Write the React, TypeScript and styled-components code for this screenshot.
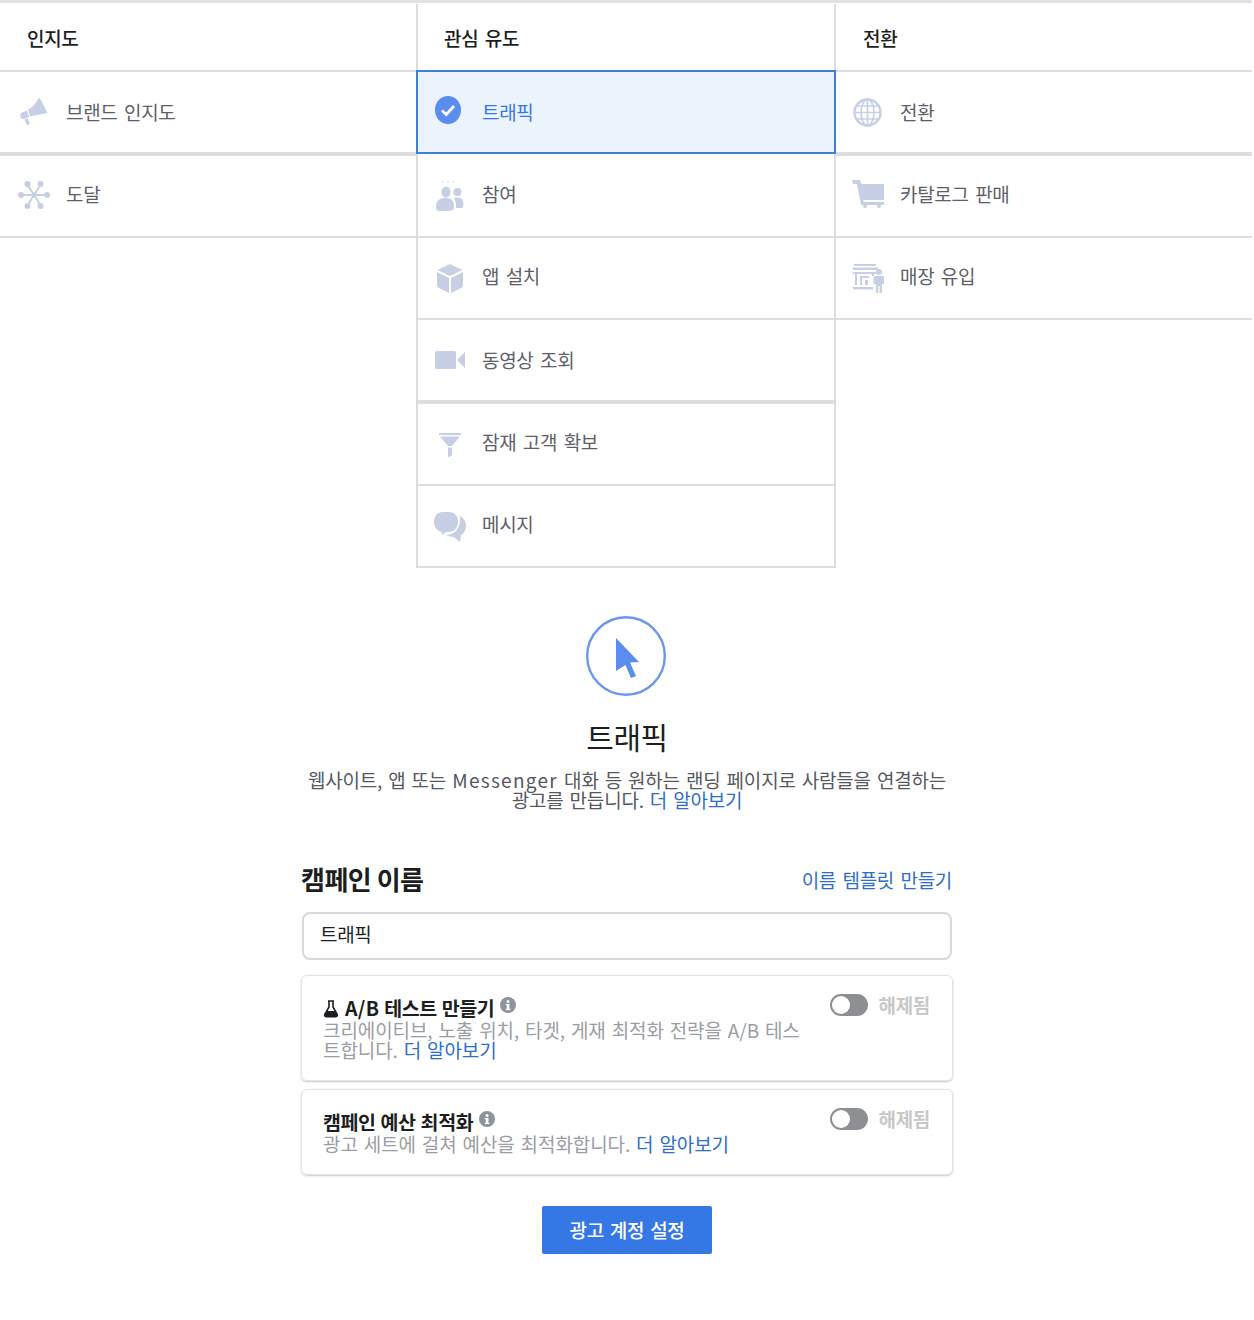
import React from 'react';
import styled, { createGlobalStyle } from 'styled-components';

const Global = createGlobalStyle`
  html, body { margin: 0; padding: 0; background: #fff; }
  body { font-family: "Noto Sans CJK KR", "Liberation Sans", sans-serif; color: #1c1e21; }
  * { box-sizing: border-box; }
`;
const ICON = '#c6cfe3';
const Page = styled.div`
  width: 1254px; height: 1320px; background: #fff; display: flex; flex-direction: column; align-items: center;
`;
const Table = styled.div`
  width: 1252px; align-self: flex-start; border-top: 3px solid #e2e2e2; padding-top: 1px;
  display: grid; grid-template-columns: 416px 420px 416px; align-items: start;
`;
const Column = styled.div<{ $mid?: boolean }>`
  display: flex; flex-direction: column;
  ${p => p.$mid ? 'border-left: 2px solid #dcdcdc; border-right: 2px solid #dcdcdc;' : ''}
`;
const Head = styled.div<{ $mid?: boolean }>`
  height: 68px; border-bottom: 2px solid #dedede; display: flex; align-items: center;
  padding-left: ${p => p.$mid ? 26 : 27}px; font-size: 19px; font-weight: 500; color: #1c1e21;
  letter-spacing: -0.3px; word-spacing: 2.5px;
`;
const Row = styled.div<{ $h?: number; $line?: number; $pb?: number; $sel?: boolean }>`
  height: ${p => p.$h ?? 82}px; border-bottom: ${p => p.$line ?? 2}px solid #dedede;
  display: flex; align-items: center; padding-bottom: ${p => p.$pb ?? 6}px; font-size: 19px; color: #5d6068;
  letter-spacing: -0.3px; word-spacing: 2.5px;
  ${p => p.$sel ? `
    background: #ebf4fd; color: #3578e5; border: 2px solid #3f7fd6; margin: -2px -2px 0; height: 84px; padding-bottom: 2px;
  ` : ''}
`;
const IconBox = styled.span<{ $w: number; $dy?: number; $shift?: number }>`
  width: ${p => p.$w}px; flex: none; display: flex; justify-content: center; align-items: center;
  margin-top: ${p => p.$dy ?? 0}px;
  svg { display: block; position: relative; left: ${p => p.$shift ?? 0}px; }
`;
const Hero = styled.div`
  margin-top: 48px; display: flex; flex-direction: column; align-items: center;
`;
const CursorBadge = styled.svg`
  display: block; margin-left: -2px;
`;
const HeroTitle = styled.h1`
  margin: 18px 0 0; font-size: 30px; line-height: 44px; font-weight: 400; color: #1c1e21; letter-spacing: -0.4px;
`;
const HeroText = styled.p`
  margin: 12px 0 0; width: 650px; text-align: center; font-size: 19px; line-height: 20px; color: #55585f;
  letter-spacing: -0.2px; word-spacing: 2px;
`;
const Latin = styled.span`
  letter-spacing: 1.3px;
`;
const A = styled.a`
  color: #2d6fc8; text-decoration: none;
`;
const Form = styled.div`
  width: 652px; margin-top: 49px; display: flex; flex-direction: column;
`;
const NameRow = styled.div`
  display: flex; justify-content: space-between; align-items: center; height: 40px; padding: 0 1px 0 0;
`;
const NameLabel = styled.h2`
  margin: -2px 0 0; font-size: 26px; font-weight: 700; color: #1c1e21; letter-spacing: -0.5px;
`;
const NameLink = styled(A)`
  font-size: 19px; letter-spacing: -0.3px; word-spacing: 2.5px;
`;
const Input = styled.div`
  margin: 13px 1px 0 1px; height: 48px; border: 2px solid #d8d8d8; border-radius: 8px; padding: 0 0 6px 16px;
  display: flex; align-items: center; font-size: 19px; color: #1c1e21; letter-spacing: -0.3px;
`;
const Card = styled.div<{ $h: number }>`
  margin-top: ${p => p.$h > 100 ? 15 : 8}px; height: ${p => p.$h}px; border: 1px solid #e3e3e3; border-radius: 6px;
  box-shadow: 0 1px 2px rgba(0,0,0,.22); padding: 21px 22px 0 21px; display: flex; justify-content: space-between; align-items: flex-start;
`;
const CardMain = styled.div`
  width: 486px;
`;
const CardTitle = styled.div`
  display: flex; align-items: center; gap: 6px; font-size: 19.5px; line-height: 22px; font-weight: 700; color: #1c1e21;
  letter-spacing: -0.42px; word-spacing: 1px;
`;
const CardLatin = styled.span`
  letter-spacing: 0.3px; margin-right: 5px;
`;
const CardHeading = styled.span`
  display: inline-block;
`;
const CardText = styled.div`
  margin-top: 1px; font-size: 19px; line-height: 20px; color: #9a9da3; letter-spacing: -0.1px; word-spacing: 1.8px;
`;
const ToggleWrap = styled.div`
  display: flex; align-items: center; gap: 10px; font-size: 19px; font-weight: 700; color: #c8c8c8; letter-spacing: -0.3px; margin-top: -4px; line-height: 24px;
`;
const Toggle = styled.span`
  width: 38px; height: 22px; border-radius: 11px; background: #8e8f93; position: relative; display: block;
  &::after { content: ''; position: absolute; left: 2px; top: 2px; width: 18px; height: 18px; border-radius: 50%; background: #fff; }
`;
const Button = styled.button`
  margin-top: 31px; width: 170px; height: 48px; border: 0; border-radius: 2px; background: #3578e5; color: #fff;
  font-family: inherit; font-size: 19px; font-weight: 500; letter-spacing: -0.3px; word-spacing: 2px; padding: 0 0 2px;
`;

const Info = () => (
  <svg width="16" height="16" viewBox="0 0 16 16" style={{ marginTop: -7 }}>
    <circle cx="8" cy="8" r="8" fill="#8d949e" />
    <rect x="6.8" y="7" width="2.6" height="6" fill="#fff" />
    <rect x="5.8" y="7" width="3" height="1.3" fill="#fff" />
    <rect x="5.8" y="11.8" width="4.6" height="1.3" fill="#fff" />
    <circle cx="8" cy="4.4" r="1.5" fill="#fff" />
  </svg>
);
const Flask = () => (
  <svg width="16" height="18" viewBox="0 0 16 18" style={{ marginTop: 1 }}>
    <path d="M5 1h6M6 1.5v5.5L1.8 14.5a1.5 1.5 0 0 0 1.3 2.2h9.8a1.5 1.5 0 0 0 1.3-2.2L10 7V1.5" fill="none" stroke="#1c1e21" strokeWidth="1.6" />
    <path d="M3.8 11h8.4l2.2 4.4-1 1.3H2.6l-1-1.3z" fill="#1c1e21" />
  </svg>
);
const Megaphone = () => (
  <svg width="30" height="30" viewBox="0 0 30 30">
    <g fill={ICON}>
      <path d="M20 1 Q21 1 22 3 L28.500 16 Q21 17 11 19.500 L9 12.500 Q16 9 19 2Z" />
      <path d="M8 13.500 L10 20 L5 22 C1 23 0 17 3 15.500Z" />
      <path d="M5.500 22.500 L8.500 21.500 L11 27 L8 28.500Z" />
    </g>
  </svg>
);
const Reach = () => (
  <svg width="32" height="30" viewBox="0 0 32 30">
    <g stroke={ICON} strokeWidth="2"><path d="M16 15 L9 4M16 15 L23 4M16 15 L3 15M16 15 L29 15M16 15 L9 26M16 15 L23 26" /></g>
    <g fill={ICON}><circle cx="16" cy="15" r="2.5" /><circle cx="9.500" cy="4" r="3" /><circle cx="22.500" cy="4" r="3" /><circle cx="3" cy="15" r="3" /><circle cx="29" cy="15" r="3" /><circle cx="9.500" cy="26" r="3" /><circle cx="22.500" cy="26" r="3" /></g>
  </svg>
);
const Check = () => (
  <svg width="26" height="28" viewBox="0 0 26 28">
    <ellipse cx="13" cy="14" rx="13" ry="14" fill="#5b8def" />
    <path d="M7 14.500 L11.300 18.500 L19 10" fill="none" stroke="#fff" strokeWidth="2.800" />
  </svg>
);
const People = () => (
  <svg width="28" height="30" viewBox="0 0 28 30">
    <g fill={ICON}>
      <circle cx="7" cy="1" r=".8" /><circle cx="12" cy="1" r=".8" /><circle cx="17" cy="1" r=".8" />
      <ellipse cx="10" cy="11" rx="4.500" ry="5.500" />
      <path d="M0 26 C0 19 4 17 10 17 C16 17 18 20 18 26 C18 29 16 30 10 30 H4 C1 30 0 29 0 26Z" />
      <circle cx="21.500" cy="11" r="4" />
      <path d="M18 17.500 C20 16 26 16 27 20 C28 24 27 27 26 27 H20 C20 23 20 20 18 17.500Z" />
    </g>
  </svg>
);
const Box = () => (
  <svg width="26" height="29" viewBox="0 0 26 29">
    <g fill={ICON}>
      <path d="M13 0 L25.500 6 L13 12 L.5 6Z" />
      <path d="M0 8 L12 14 V29 L2 24 Q0 23 0 21Z" />
      <path d="M26 8 L14 14 V29 L24 24 Q26 23 26 21Z" />
    </g>
  </svg>
);
const Video = () => (
  <svg width="30" height="18" viewBox="0 0 30 18">
    <g fill={ICON}>
      <rect x="0" y="0" width="21" height="18" rx="1.500" />
      <path d="M30 1 V17 L23 10 V8Z" />
    </g>
  </svg>
);
const Funnel = () => (
  <svg width="22" height="24" viewBox="0 0 22 24">
    <g fill={ICON}>
      <rect x="0" y="0" width="22" height="2" />
      <path d="M1 3.500 H21 L13 13 H9Z" />
      <path d="M9 14.500 H13 V22 L10 24 H9Z" />
    </g>
  </svg>
);
const Chat = () => (
  <svg width="32" height="30" viewBox="0 0 32 30">
    <g fill={ICON}>
      <path d="M9 0 H15 C21 0 24 4 24 10 C24 16 20 20 15 20 H12 L8 23 V20 C3 19 0 15 0 10 C0 4 3 0 9 0Z" />
      <path d="M26 4 C30 6 32 10 32 14 C32 19 29 22 27 23 L26 30 L20 25 C17 25 14 24 12 23 C20 23 27 17 26 4Z" />
    </g>
  </svg>
);
const Globe = () => (
  <svg width="29" height="29" viewBox="0 0 29 29">
    <g fill="none" stroke={ICON} strokeWidth="1.600">
      <circle cx="14.500" cy="14.500" r="13" strokeWidth="2.400" />
      <ellipse cx="14.500" cy="14.500" rx="6.500" ry="13" />
      <path d="M14.500 1.500 V27.500 M1.500 14.500 H27.500 M3.500 8 H25.500 M3.500 21 H25.500" />
    </g>
  </svg>
);
const Cart = () => (
  <svg width="33" height="28" viewBox="0 0 33 28">
    <g fill={ICON}>
      <path d="M0 0 H8 L9.500 4 H32 V20 H11 L12 22 H32 V25 H9 L5 4 H1Z" />
      <circle cx="13" cy="26" r="2" /><circle cx="27" cy="26" r="2" />
    </g>
  </svg>
);
const Store = () => (
  <svg width="31" height="29" viewBox="0 0 31 29">
    <g fill={ICON}>
      <rect x="1" y="0" width="22" height="2" /><rect x="0" y="3.500" width="25" height="2.500" /><rect x="0" y="8" width="23" height="2" />
      <path d="M2 10 H4 V21 H2Z M7 12 H16 V14 H9 V21 H7Z M12 16 H15 V21 H12Z M19 10 H21 V12 H19Z" />
      <rect x="0" y="23" width="20" height="2.400" />
      <circle cx="26" cy="8" r="3" />
      <path d="M21.500 12 H30 Q31 12 31 14 V20 H29 V29 H26.600 V22 H25.400 V29 H23 V20 H20.500 V14 Q20.500 12 21.500 12Z" />
    </g>
  </svg>
);
const Cursor = () => (
  <CursorBadge width="80" height="80" viewBox="0 0 80 80">
    <circle cx="40" cy="40" r="38.800" fill="none" stroke="#6a97ee" strokeWidth="2.400" />
    <path d="M30 22 L53 46 L44 46.500 L50 60 L45 62 L39.500 49 L30 55Z" fill="#5b8def" />
  </CursorBadge>
);

export default function App() {
  return (
    <Page>
      <Global />
      <Table>
        <Column>
          <Head>인지도</Head>
          <Row $h={84} $line={4} $pb={2}><IconBox $w={66} $dy={2} $shift={1}><Megaphone /></IconBox>브랜드 인지도</Row>
          <Row $h={82}><IconBox $w={66} $dy={4} $shift={1}><Reach /></IconBox>도달</Row>
        </Column>
        <Column $mid>
          <Head $mid>관심 유도</Head>
          <Row $sel><IconBox $w={64} $dy={-2} $shift={-2}><Check /></IconBox>트래픽</Row>
          <Row $h={84} $pb={4}><IconBox $w={64} $dy={6}><People /></IconBox>참여</Row>
          <Row $h={82}><IconBox $w={64} $dy={6}><Box /></IconBox>앱 설치</Row>
          <Row $h={84} $line={4} $pb={2}><IconBox $w={64} $dy={2}><Video /></IconBox>동영상 조회</Row>
          <Row $h={82}><IconBox $w={64} $dy={8}><Funnel /></IconBox>잠재 고객 확보</Row>
          <Row $h={82}><IconBox $w={64} $dy={8}><Chat /></IconBox>메시지</Row>
        </Column>
        <Column>
          <Head>전환</Head>
          <Row $h={84} $line={4} $pb={2}><IconBox $w={64} $dy={2} $shift={-1}><Globe /></IconBox>전환</Row>
          <Row $h={82}><IconBox $w={64} $dy={2}><Cart /></IconBox>카탈로그 판매</Row>
          <Row $h={82}><IconBox $w={64} $dy={6}><Store /></IconBox>매장 유입</Row>
        </Column>
      </Table>
      <Hero>
        <Cursor />
        <HeroTitle>트래픽</HeroTitle>
        <HeroText>웹사이트, 앱 또는 <Latin>Messenger</Latin> 대화 등 원하는 랜딩 페이지로 사람들을 연결하는 광고를 만듭니다. <A>더 알아보기</A></HeroText>
      </Hero>
      <Form>
        <NameRow><NameLabel>캠페인 이름</NameLabel><NameLink>이름 템플릿 만들기</NameLink></NameRow>
        <Input>트래픽</Input>
        <Card $h={106}>
          <CardMain>
            <CardTitle><Flask /><CardHeading><CardLatin>A/B</CardLatin>테스트 만들기</CardHeading><Info /></CardTitle>
            <CardText>크리에이티브, 노출 위치, 타겟, 게재 최적화 전략을 A/B 테스트합니다. <A>더 알아보기</A></CardText>
          </CardMain>
          <ToggleWrap><Toggle />해제됨</ToggleWrap>
        </Card>
        <Card $h={86}>
          <CardMain>
            <CardTitle>캠페인 예산 최적화<Info /></CardTitle>
            <CardText>광고 세트에 걸쳐 예산을 최적화합니다. <A>더 알아보기</A></CardText>
          </CardMain>
          <ToggleWrap><Toggle />해제됨</ToggleWrap>
        </Card>
      </Form>
      <Button>광고 계정 설정</Button>
    </Page>
  );
}
